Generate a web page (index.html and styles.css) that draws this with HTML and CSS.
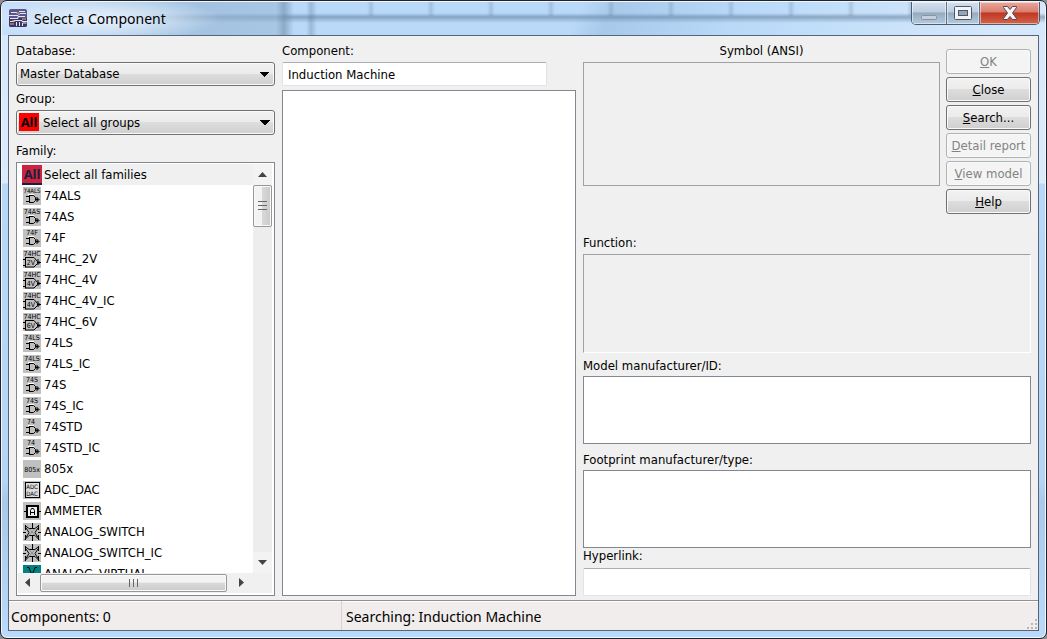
FILE: index.html
```html
<!DOCTYPE html>
<html lang="en">
<head>
<meta charset="utf-8">
<title>Select a Component</title>
<link rel="stylesheet" href="styles.css">
</head>
<body>
<svg class="defs" aria-hidden="true">
  <symbol id="gate" viewBox="0 0 18 18">
    <path class="fill-bg" d="M0 0h18v18H0z"/>
    <path class="shine" d="M5 7.500h6"/>
    <path class="ink" d="M3 9.500h4M3 14.500h4M6.500 8v8M6 8.500h4.500l2 2v3l-2 2H6M13 12.500h2M14 10v5M15 11v3M16 12v1"/>
  </symbol>
  <symbol id="hcgate" viewBox="0 0 18 18">
    <path class="fill-bg" d="M0 0h18v18H0z"/>
    <path class="ink" d="M0 9.500h3M0 15.500h3M2.500 7v10M2 7.500h9l3.500 4v2l-3.500 3.500H2M14 12.500h4M15 9v6M16 11v3"/>
  </symbol>
  <symbol id="switch" viewBox="0 0 18 18">
    <path class="fill-bg" d="M0 0h18v18H0z"/>
    <path class="ink" d="M9.500 0v5M9.500 13v5M0 9.500h3M15 9.500h3M2.500 2v5M2.500 12v5M15.500 2v5M15.500 12v5M2 2.500l4 3h6l4-3M2 16.500l4-4h6l4 4M3 5l3 4.500-3 5M15 5l-3 4.500 3 5"/>
    <path class="haze" d="M6 5.500l6 7M12 5.500l-6 7"/>
  </symbol>
</svg>
<div class="window">
  <header class="titlebar">
    <svg class="app-icon" viewBox="0 0 18 18" aria-hidden="true">
      <rect width="18" height="18" rx="2" fill="#5b558e"/>
      <path d="M0 9h18v7a2 2 0 0 1-2 2H2a2 2 0 0 1-2-2z" fill="#3d3668"/>
      <path d="M2 3.500h6M10 2.500h6M0 6.500h9l2-2h6M1 9.500h8V7.500h7M1 12.500h4v-1h8v1h5M7.500 17v-4M10.500 17v-4M13.500 17v-3h4" fill="none" stroke="#e4e6f4"/>
      <path d="M7 4h3M3 12h3M13 10h4M1 15h4" fill="none" stroke="#e0b56e"/>
    </svg>
    <h1 class="title">Select a Component</h1>
    <div class="caption-buttons">
      <button class="cap cap-min" type="button" aria-label="Minimize" disabled>
        <svg width="18" height="16" viewBox="0 0 18 16"><rect x="1.500" y="10.500" width="15" height="4" rx="1" fill="#c5d0dc" stroke="#8492a3"/></svg>
      </button>
      <button class="cap" type="button" aria-label="Maximize">
        <svg width="18" height="16" viewBox="0 0 18 16"><rect x=".5" y="1.500" width="17" height="13" rx="1" fill="#f2f3f5" stroke="#4f586b"/><rect x="4.500" y="5.500" width="9" height="5" fill="#91a8bd" stroke="#4f586b"/></svg>
      </button>
      <button class="cap cap-close" type="button" aria-label="Close window">
        <svg width="18" height="16" viewBox="0 0 18 16"><path d="M2.500 1.500h4L9 4.500l2.500-3h4v1L11.500 8l4 5.500v1h-4L9 11.500l-2.500 3h-4v-1L6.500 8l-4-5.500z" fill="#f5f5f7" stroke="#5a4450"/></svg>
      </button>
    </div>
  </header>

  <main class="client">
    <div class="columns">
      <section class="col">
        <label class="label" for="database">Database:</label>
        <select class="combo" id="database"><option>Master Database</option></select>
        <label class="label label-group" for="group">Group:</label>
        <div class="combo-wrap">
          <select class="combo combo-icon" id="group"><option>Select all groups</option></select>
          <span class="all-badge" aria-hidden="true">All</span>
        </div>
        <span class="label label-family" id="family-label">Family:</span>
        <div class="family">
          <ul class="family-list" role="listbox" aria-labelledby="family-label">
            <li class="item selected" role="option" aria-selected="true"><span class="all-badge all-dark" aria-hidden="true">All</span>Select all families</li>
            <li class="item" role="option"><svg class="icon"><use href="#gate"/><text class="small" x="9" y="6">74ALS</text></svg>74ALS</li>
            <li class="item" role="option"><svg class="icon"><use href="#gate"/><text x="9" y="6">74AS</text></svg>74AS</li>
            <li class="item" role="option"><svg class="icon"><use href="#gate"/><text x="9" y="6">74F</text></svg>74F</li>
            <li class="item" role="option"><svg class="icon"><use href="#hcgate"/><text x="9" y="6">74HC</text><text x="8" y="15">2V</text></svg>74HC_2V</li>
            <li class="item" role="option"><svg class="icon"><use href="#hcgate"/><text x="9" y="6">74HC</text><text x="8" y="15">4V</text></svg>74HC_4V</li>
            <li class="item" role="option"><svg class="icon"><use href="#hcgate"/><text x="9" y="6">74HC</text><text x="8" y="15">4V</text></svg>74HC_4V_IC</li>
            <li class="item" role="option"><svg class="icon"><use href="#hcgate"/><text x="9" y="6">74HC</text><text x="8" y="15">6V</text></svg>74HC_6V</li>
            <li class="item" role="option"><svg class="icon"><use href="#gate"/><text x="9" y="6">74LS</text></svg>74LS</li>
            <li class="item" role="option"><svg class="icon"><use href="#gate"/><text x="9" y="6">74LS</text></svg>74LS_IC</li>
            <li class="item" role="option"><svg class="icon"><use href="#gate"/><text x="9" y="6">74S</text></svg>74S</li>
            <li class="item" role="option"><svg class="icon"><use href="#gate"/><text x="9" y="6">74S</text></svg>74S_IC</li>
            <li class="item" role="option"><svg class="icon"><use href="#gate"/><text x="8" y="6">74</text></svg>74STD</li>
            <li class="item" role="option"><svg class="icon"><use href="#gate"/><text x="8" y="6">74</text></svg>74STD_IC</li>
            <li class="item" role="option"><svg class="icon"><rect class="fill-bg" width="18" height="18"/><text x="9" y="12">805x</text></svg>805x</li>
            <li class="item" role="option"><svg class="icon"><rect class="fill-bg" width="18" height="18"/><rect x="2.500" y="1.500" width="14" height="15" fill="#dcdcdc" stroke="#000"/><text class="small" x="9" y="8">ADC</text><text class="small" x="9" y="15">DAC</text></svg>ADC_DAC</li>
            <li class="item" role="option"><svg class="icon"><rect class="fill-bg" width="18" height="18"/><path class="ink" d="M1 9.500h3M14 9.500h4"/><rect x="4" y="4" width="11" height="11" fill="#eee" stroke="#000" stroke-width="2"/><path class="ink" d="M7.500 13V8.500l1-2h2l1 2V13M7 10.500h5"/></svg>AMMETER</li>
            <li class="item" role="option"><svg class="icon"><use href="#switch"/></svg>ANALOG_SWITCH</li>
            <li class="item" role="option"><svg class="icon"><use href="#switch"/></svg>ANALOG_SWITCH_IC</li>
            <li class="item" role="option"><svg class="icon"><rect width="18" height="18" fill="#008080"/><path class="ink" d="M4 2.500h2l1 3 2 4M14 2.500h-2l-1 3-2 4M9.500 9v8"/></svg>ANALOG_VIRTUAL</li>
          </ul>
          <div class="vscroll" aria-hidden="true">
            <svg class="arrow" viewBox="0 0 19 21"><path d="M5 13l4.500-5 4.500 5z"/></svg>
            <div class="vthumb"><svg width="10" height="14"><path d="M0 2.500h9M0 6.500h9M0 10.500h9"/></svg></div>
            <svg class="arrow arrow-end" viewBox="0 0 19 21"><path d="M5 8h9l-4.500 5z"/></svg>
          </div>
          <div class="hscroll" aria-hidden="true">
            <svg class="harrow" viewBox="0 0 22 20"><path d="M12 5v9l-5-4.500z"/></svg>
            <div class="hthumb"><svg width="14" height="10"><path d="M2.500 1v8M6.500 1v8M10.500 1v8"/></svg></div>
            <svg class="harrow" viewBox="0 0 22 20"><path d="M12 5v9l5-4.500z"/></svg>
          </div>
        </div>
      </section>

      <section class="col">
        <label class="label" for="component">Component:</label>
        <input class="field field-component" id="component" type="text" value="Induction Machine">
        <div class="listbox" role="listbox" aria-label="Components"></div>
      </section>

      <section class="col">
        <div class="top">
          <div class="symbol-area">
            <span class="label label-center">Symbol (ANSI)</span>
            <div class="symbol"></div>
          </div>
          <div class="actions">
            <button class="btn" type="button" disabled><u>O</u>K</button>
            <button class="btn" type="button"><u>C</u>lose</button>
            <button class="btn" type="button"><u>S</u>earch...</button>
            <button class="btn" type="button" disabled><u>D</u>etail report</button>
            <button class="btn" type="button" disabled><u>V</u>iew model</button>
            <button class="btn" type="button"><u>H</u>elp</button>
          </div>
        </div>
        <label class="label" for="function">Function:</label>
        <textarea class="area area-function" id="function" readonly></textarea>
        <label class="label label-model" for="model">Model manufacturer/ID:</label>
        <textarea class="area area-model" id="model" readonly></textarea>
        <label class="label label-footprint" for="footprint">Footprint manufacturer/type:</label>
        <textarea class="area area-footprint" id="footprint" readonly></textarea>
        <label class="label label-link" for="hyperlink">Hyperlink:</label>
        <input class="field field-link" id="hyperlink" type="text">
      </section>
    </div>

    <footer class="status">
      <span class="status-count">Components: 0</span>
      <span class="status-text">Searching: Induction Machine</span>
      <svg class="grip" width="12" height="12" aria-hidden="true"><path d="M9 1h2v2H9zM5 5h2v2H5zM9 5h2v2H9zM1 9h2v2H1zM5 9h2v2H5zM9 9h2v2H9z" fill="#b8b6b6"/></svg>
    </footer>
  </main>
</div>
</body>
</html>
```
FILE: styles.css
```css
* { box-sizing: border-box; }

body {
  margin: 0;
  background: #8f8f8f;
  color: #000;
  font: 13px/16px "DejaVu Sans Condensed", "Noto Sans", sans-serif;
}

button, input, select, textarea { font: inherit; color: inherit; margin: 0; }

.defs { position: absolute; width: 0; height: 0; }

/* Glass frame */
.window {
  display: flex;
  flex-direction: column;
  height: 100vh;
  min-height: 560px;
  padding: 0 7px 7px;
  border: 1px solid #20222c;
  border-radius: 7px;
  box-shadow: inset 0 0 0 1px #eff7ff;
  background: linear-gradient(#d5e8fb 0, #dcebfa 182px, #b7d8f8 183px, #b5d5f5 480px, #a9c9ea 500px, #b9dafa 100%);
  overflow: hidden;
}

.titlebar {
  display: flex;
  align-items: flex-start;
  flex: none;
  height: 33px;
  margin: 1px -6px 0;
  padding-left: 7px;
  background:
    radial-gradient(ellipse 120px 22px at 100px 17px, rgba(238, 246, 255, .9), rgba(238, 246, 255, 0)),
    linear-gradient(90deg, #c7dffa 0, #c1daf3 50px, rgba(150, 180, 210, .6) 200px, rgba(150, 180, 210, .5) 274px, rgba(110, 140, 170, .6) 282px, rgba(180, 210, 240, 0) 292px),
    linear-gradient(90deg, transparent 304px, rgba(80, 110, 140, .3) 309px, transparent 315px),
    linear-gradient(transparent 11px, rgba(100, 130, 160, .6) 15px, transparent 21px),
    repeating-linear-gradient(90deg, transparent 0 52px, rgba(90, 120, 150, .25) 56px, transparent 60px 60px) 313px 0 / 100% 14px no-repeat,
    linear-gradient(115deg, transparent 55%, rgba(130, 165, 200, .3) 58%, transparent 70%, rgba(220, 235, 252, .8) 95%),
    #b8d9f8;
}

.app-icon { width: 18px; height: 18px; margin-top: 7px; }

.title {
  flex: 1;
  margin: 7px 0 0 7px;
  font: 400 14px/20px "Noto Sans", sans-serif;
}

.caption-buttons {
  display: flex;
  height: 23px;
  margin-right: 5px;
  border: 1px solid #4c5b6e;
  border-top: 0;
  border-radius: 0 0 5px 5px;
  overflow: hidden;
}

.cap {
  display: flex;
  align-items: center;
  justify-content: center;
  width: 33px;
  padding: 0;
  border: 0;
  border-right: 1px solid #607083;
  box-shadow: inset 0 0 0 1px rgba(255, 255, 255, .5);
  background: linear-gradient(#d3e0ee 0, #bccddf 45%, #94aabf 50%, #b5cbe0 100%);
}

.cap-min { width: 35px; }

.cap-close {
  width: 59px;
  border-right: 0;
  background: linear-gradient(#e9a99c 0, #d97d6d 45%, #bf3722 50%, #d2644c 100%);
}

/* Dialog body */
.client {
  display: flex;
  flex-direction: column;
  flex: 1;
  min-height: 0;
  border: 1px solid #56657a;
  background: #f0f0f0;
}

.columns {
  display: grid;
  grid-template-columns: 259fr 294fr 448fr;
  grid-template-rows: minmax(0, 1fr);
  gap: 7px;
  flex: 1;
  min-height: 0;
  padding: 7px 7px 4px;
}

.col { display: flex; flex-direction: column; min-width: 0; min-height: 0; }

.label { flex: none; margin-bottom: 3px; }
.label-group { margin-top: 5px; }
.label-family { margin-top: 8px; }
.label-center { text-align: center; }
.label-model { margin: 5px 0 2px; }
.label-footprint { margin: 8px 0 2px; }
.label-link { margin-bottom: 4px; }

.combo {
  flex: none;
  width: 100%;
  height: 24px;
  padding: 0 20px 0 3px;
  border: 1px solid #707070;
  border-radius: 3px;
  appearance: none;
  box-shadow: inset 0 0 0 1px #fafafa;
  background:
    conic-gradient(from -45deg at 50% 5px, #000 90deg, transparent 0) right 4px center / 10px 5px no-repeat,
    linear-gradient(#f2f2f2 0, #ebebeb 48%, #dddddd 50%, #cfcfcf 100%);
}

.combo-wrap { position: relative; flex: none; display: flex; }
.combo-icon { height: 25px; padding-left: 26px; }
.combo-wrap .all-badge { position: absolute; left: 3px; top: 3px; }

.all-badge {
  width: 20px;
  height: 18px;
  background: #f00;
  font: 700 13px/18px "Noto Sans", sans-serif;
  text-align: center;
}

.all-dark {
  height: 20px;
  border-bottom: 2px solid #14233d;
  background: #cc2440;
  color: #14233d;
}

.family {
  display: grid;
  grid-template: minmax(0, 1fr) 20px / minmax(0, 1fr) 19px;
  flex: 1;
  min-height: 0;
  padding: 1px 2px 2px 1px;
  border: 1px solid #828790;
  background: #fff;
}

.family-list { margin: 0; padding: 0 0 0 4px; list-style: none; overflow: hidden; }

.item { display: flex; align-items: center; gap: 3px; height: 21px; padding-left: 1px; }
.item.selected { gap: 2px; padding-left: 0; background: #f0f0f0; }

.icon { flex: none; width: 18px; height: 18px; }
.icon text { font: 400 7px "DejaVu Sans Condensed", sans-serif; text-anchor: middle; }
.icon .small { font-size: 6px; }
.fill-bg { fill: #c0c0c0; }
.ink { fill: none; stroke: #000; }
.shine { fill: none; stroke: #fff; }
.haze { fill: none; stroke: #8c8c8c; }

.vscroll { display: flex; flex-direction: column; background: #ededed; }
.hscroll { display: flex; grid-column: 1 / 3; padding-right: 19px; background: #f0f0f0; }
.arrow { flex: none; height: 21px; background: #f3f3f3; fill: #444; }
.arrow-end { margin-top: auto; }
.harrow { flex: none; width: 22px; fill: #444; }

.vthumb, .hthumb {
  display: flex;
  align-items: center;
  justify-content: center;
  border: 1px solid #979797;
  border-radius: 2px;
  box-shadow: inset 0 0 0 1px #fafafa;
  stroke: #666;
}

.vthumb { height: 42px; background: linear-gradient(90deg, #f3f3f3 45%, #d8d8d8 50%, #c9c9c9); }
.hthumb { flex: 0 1 187px; margin: 1px 0; background: linear-gradient(#f3f3f3 45%, #dadada 50%, #cacaca); }

.field {
  flex: none;
  height: 24px;
  padding: 0 5px;
  border: 1px solid #e2e3ea;
  border-top-color: #abadb3;
  border-radius: 2px;
  background: #fff;
}

.field-component { width: 90%; }
.field-link { width: 100%; height: 28px; }

.listbox { flex: 1; margin-top: 4px; border: 1px solid #828790; background: #fff; }

.top { display: flex; gap: 6px; flex: none; margin-bottom: 21px; }
.symbol-area { display: flex; flex-direction: column; flex: 1; }
.symbol { height: 124px; border: 1px solid #a0a0a0; }

.actions { display: flex; flex-direction: column; gap: 3px; width: 85px; padding-top: 6px; }

.btn {
  height: 25px;
  padding: 0;
  border: 1px solid #707070;
  border-radius: 3px;
  box-shadow: inset 0 0 0 1px #fafafa;
  background: linear-gradient(#f2f2f2 0, #ebebeb 48%, #dddddd 50%, #cfcfcf 100%);
  white-space: nowrap;
}

.btn:disabled { border-color: #adb2b5; background: #f4f4f4; color: #838383; }

.area {
  display: block;
  flex: 1 1 0;
  min-height: 40px;
  padding: 0;
  border: 1px solid #828790;
  border-radius: 0;
  background: #fff;
  resize: none;
}

.area-function { flex-grow: 99; border-color: #a0a0a0 #fff #fff #a0a0a0; background: #f0f0f0; }
.area-model { flex-grow: 67; }
.area-footprint { flex-grow: 77; }

.status {
  display: flex;
  flex: none;
  height: 30px;
  border-top: 1px solid #909090;
  background: #f1edec;
  box-shadow: inset 0 1px #fff;
  font: 14px/32px "Noto Sans", sans-serif;
}

.status-count { width: 333px; padding-left: 2px; border-right: 1px solid #d7d3d2; }
.status-text { flex: 1; padding-left: 4px; }
.grip { align-self: flex-end; }
```
